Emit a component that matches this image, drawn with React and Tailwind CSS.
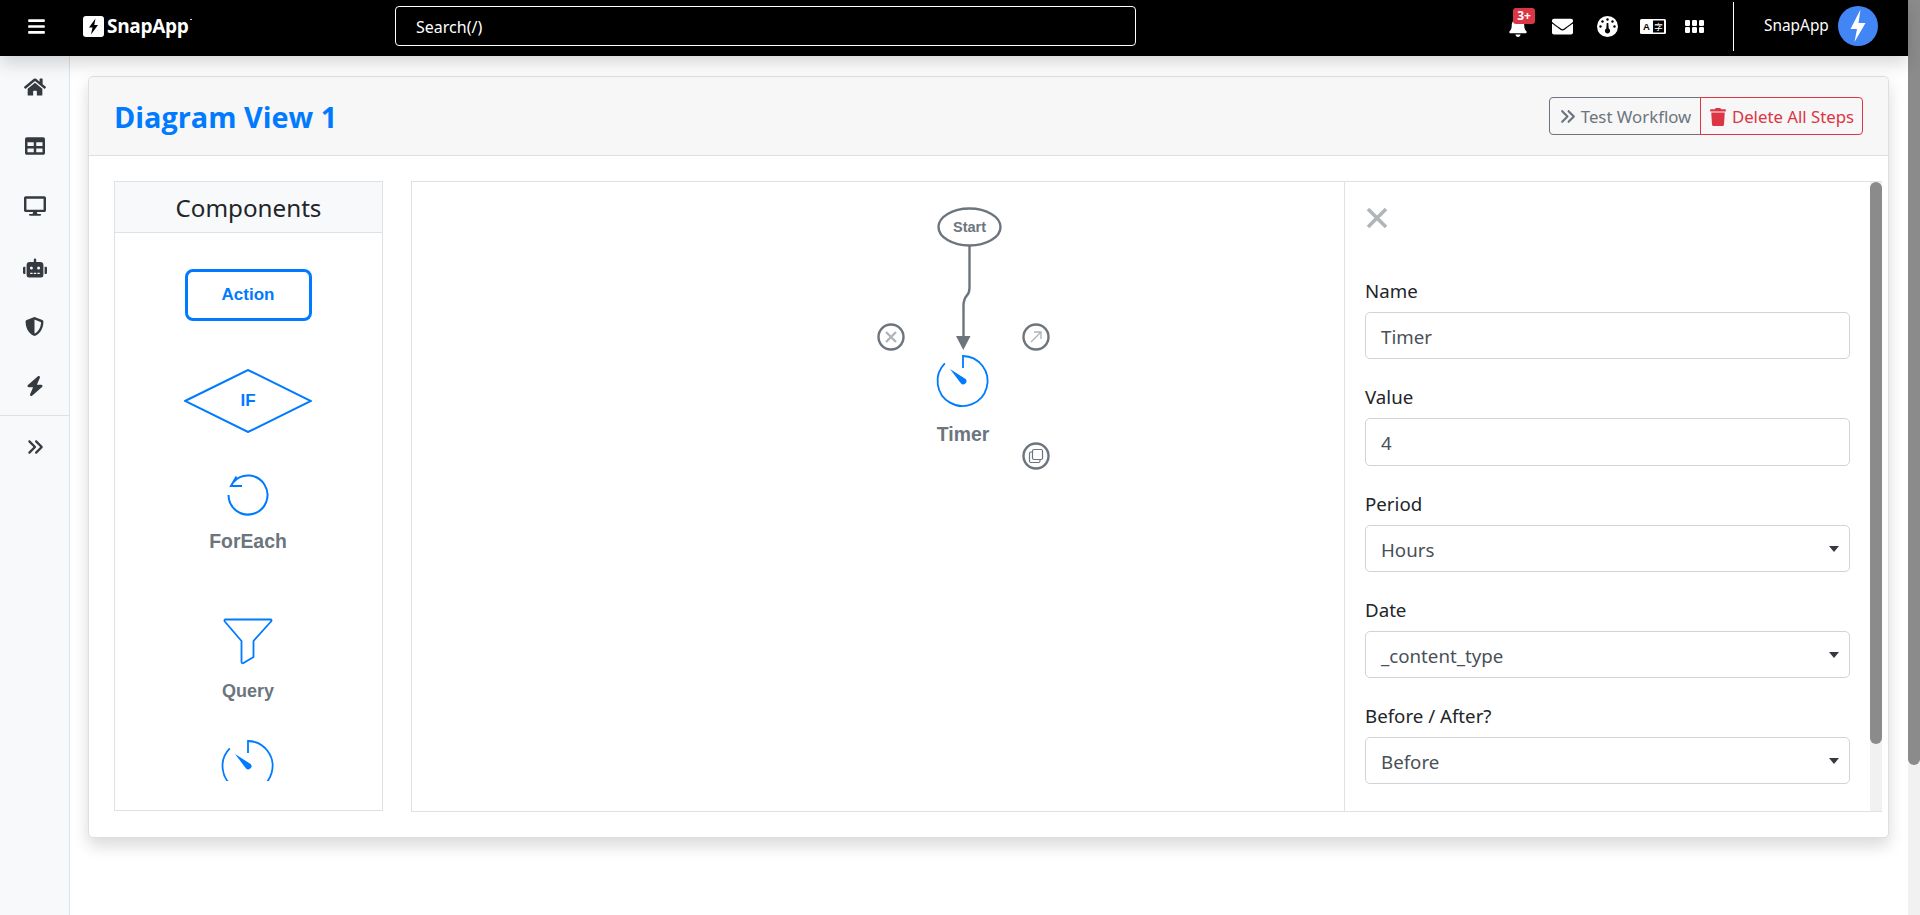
import React from "react";
import { FaBars, FaHome, FaTable, FaDesktop, FaRobot, FaShieldAlt, FaBell, FaEnvelope, FaTrash } from "react-icons/fa";
import { FaBolt, FaAnglesRight } from "react-icons/fa6";

const BLUE = "#007bff";
const GRAY = "#6c757d";

function TimerIcon({ cx, cy }) {
  return (
    <g>
      <path d={`M${cx} ${cy - 13}V${cy - 25}A25 25 0 1 1 ${cx - 18.2} ${cy - 17.6}`} fill="none" stroke={BLUE} strokeWidth="1.8" />
      <path d={`M${cx - 13} ${cy - 12}L${cx + 2.6} ${cy - 2}A3 3 0 1 1 ${cx - 2.2} ${cy + 2.2}Z`} fill={BLUE} />
    </g>
  );
}

function Diagram() {
  const label = { fontFamily: "'Liberation Sans', sans-serif", fontWeight: 700 };
  return (
    <svg className="block shrink-0" width="932" height="629" viewBox="412 182 932 629">
      <ellipse cx="969.500" cy="227" rx="31" ry="18.500" fill="none" stroke={GRAY} strokeWidth="2.4" />
      <text x="969.500" y="232" textAnchor="middle" fontSize="14.500" fill={GRAY} style={label}>Start</text>
      <path d="M969.500 246V288C969.500 298 963.500 293 963.500 306V337" fill="none" stroke={GRAY} strokeWidth="2.4" />
      <path d="M956 336H970.500L963.300 350Z" fill={GRAY} />
      <TimerIcon cx={963} cy={381} />
      <text x="963" y="441" textAnchor="middle" fontSize="19.4" fill={GRAY} style={label}>Timer</text>

      <circle cx="891" cy="337" r="12.500" fill="none" stroke={GRAY} strokeWidth="2.4" />
      <path d="M886 332L896 342M896 332L886 342" stroke="#b0b5b8" strokeWidth="2.4" />

      <circle cx="1036" cy="337" r="12.500" fill="none" stroke={GRAY} strokeWidth="2.4" />
      <path d="M1031 342L1041 332M1034 332H1041V339" fill="none" stroke="#b0b5b8" strokeWidth="1.4" />

      <circle cx="1036" cy="456" r="12.500" fill="none" stroke={GRAY} strokeWidth="2.4" />
      <rect x="1032.500" y="449.500" width="10" height="10" rx="1.500" fill="none" stroke={GRAY} strokeWidth="1.2" />
      <path d="M1032 452H1031A1.500 1.500 0 0 0 1029.500 453.500V461A1.500 1.500 0 0 0 1031 462.500H1038.500A1.500 1.500 0 0 0 1040 461V460" fill="none" stroke={GRAY} strokeWidth="1.2" />
    </svg>
  );
}

function Field({ label, value, select }) {
  return (
    <div className="mb-[27px]">
      <div className="h-[24px] mb-[8px] leading-[22px] text-[18.7px] text-[#212529] whitespace-nowrap">{label}</div>
      <div className="relative h-[47.25px] w-[485px] rounded-[5px] border border-[#ced4da] bg-white pl-[15px] pt-[3px] flex items-center text-[18.7px] text-[#495057]">
        {value}
        {select && (
          <svg className="absolute right-[10px] top-[20px]" width="10" height="6" viewBox="0 0 10 6">
            <path d="M0 0H10L5 6Z" fill="#343a40" />
          </svg>
        )}
      </div>
    </div>
  );
}

function Palette() {
  const cap = "shrink-0 font-['Liberation_Sans',sans-serif] font-bold leading-[24px] text-[#6c757d]";
  return (
    <div className="flex flex-col items-center h-[548px] overflow-hidden pr-[1px]">
      <div className="relative shrink-0 mt-[36px] w-[127px] h-[52px] rounded-[8px] border-[3px] border-[#007bff] flex items-center justify-center font-['Liberation_Sans',sans-serif] font-bold text-[17px] text-[#007bff]">
        Action
      </div>
      <div className="relative shrink-0 mt-[48px] w-[128px] h-[64px] flex items-center justify-center font-['Liberation_Sans',sans-serif] font-bold text-[17px] text-[#007bff]">
        <svg className="absolute inset-0" width="128" height="64" viewBox="0 0 128 64">
          <path d="M1 32L64 1L127 32L64 63Z" fill="none" stroke={BLUE} strokeWidth="2" />
        </svg>
        IF
      </div>
      <svg className="mt-[41px] shrink-0" width="44" height="44" viewBox="226 474 44 44">
        <path d="M228.500 495A19.500 19.500 0 1 0 233.500 482" fill="none" stroke={BLUE} strokeWidth="2" />
        <path d="M236.500 476.500L231 486H242" fill="none" stroke={BLUE} strokeWidth="2" />
      </svg>
      <div className={`${cap} text-[19.4px] mt-[11px]`}>ForEach</div>
      <svg className="mt-[64px] shrink-0" width="50" height="48" viewBox="223 617 50 48">
        <path d="M225.500 619.500C224.500 619.500 224 620.500 224.800 621.500L241.500 641V662C241.500 663.500 242.800 663.500 243.500 663L253.500 657V641L271 621.500C272 620.500 271.500 619.500 270.500 619.500Z" fill="none" stroke={BLUE} strokeWidth="1.8" />
      </svg>
      <div className={`${cap} text-[18px] mt-[14px]`}>Query</div>
      <svg className="mt-[36px] shrink-0" width="54" height="54" viewBox="221 738 54 54">
        <TimerIcon cx={248} cy={765} />
      </svg>
    </div>
  );
}

function Dial() {
  return (
    <svg width="21" height="21" viewBox="0 0 21 21" className="ml-[24px] shrink-0">
      <circle cx="10.500" cy="10.500" r="10.500" fill="#fff" />
      <circle cx="10.500" cy="3.500" r="1.200" fill="#000" />
      <circle cx="5.500" cy="5.500" r="1.200" fill="#000" />
      <circle cx="15.500" cy="5.500" r="1.200" fill="#000" />
      <circle cx="3.500" cy="10.500" r="1.200" fill="#000" />
      <circle cx="17.500" cy="10.500" r="1.200" fill="#000" />
      <path d="M9.700 7H11.300L11.700 12.500A2.600 2.600 0 1 1 9.300 12.500Z" fill="#000" />
    </svg>
  );
}

function Lang() {
  return (
    <svg width="26" height="15" viewBox="0 0 26 15" className="ml-[22px] shrink-0">
      <rect width="26" height="15" rx="1.500" fill="#fff" />
      <rect x="13" y="1.500" width="11" height="12" fill="#000" />
      <text x="6.500" y="11" textAnchor="middle" fontSize="9.500" fontWeight="700" fill="#000" fontFamily="'Liberation Sans', sans-serif">A</text>
      <text x="18.500" y="11" textAnchor="middle" fontSize="8.500" fill="#fff" fontFamily="'Noto Sans CJK SC', sans-serif">字</text>
    </svg>
  );
}

function Grid() {
  return (
    <svg width="19" height="13" viewBox="0 0 19 13" className="ml-[19px] shrink-0">
      {[0, 7, 14].map((x) =>
        [0, 7].map((y) => <rect key={`${x}-${y}`} x={x} y={y} width="5" height="6" rx="1.200" fill="#fff" />)
      )}
    </svg>
  );
}

export default function App() {
  const sideIcons = [
    [FaHome, 22, 87],
    [FaTable, 20, 146],
    [FaDesktop, 22, 206],
    [FaRobot, 24, 268],
    [FaShieldAlt, 19, 326],
    [FaBolt, 20, 386],
  ];
  return (
    <div className="flex w-full h-[915px] overflow-hidden bg-white font-['Noto_Sans','Open_Sans',sans-serif]">
      <div className="flex-1 min-w-0 flex flex-col">
        <header className="relative z-10 h-[56px] shrink-0 bg-black flex items-center pb-[4px] text-white shadow-[0_8px_16px_rgba(0,0,0,0.15)]">
          <FaBars className="ml-[27px] shrink-0" size={19} />
          <svg className="ml-[37px] shrink-0" width="21" height="21" viewBox="0 0 21 21">
            <rect width="21" height="21" rx="3" fill="#fff" />
            <path d="M12.500 2.500L6 11.500H9.500L8 18.500L15 9H11.300Z" fill="#000" />
          </svg>
          <div className="ml-[3px] w-[85px] shrink-0 font-['Open_Sans',sans-serif] font-bold text-[19px] leading-[24px] tracking-[-0.3px] flex items-start">
            SnapApp<span className="ml-[1px] mt-[5px] w-[4px] h-[1px] bg-gray-300" />
          </div>
          <div className="ml-[203px] w-[741px] h-[40px] shrink-0 rounded-[4px] border border-white flex items-center pl-[20px] pt-[2px] text-[16px] text-white">
            Search(/)
          </div>
          <div className="ml-auto flex items-center pr-[30px]">
            <div className="relative w-[20px] h-[22px]">
              <FaBell size={20} className="mt-[2px]" />
              <span className="absolute left-[5px] top-[-7px] w-[22px] h-[16px] rounded-[3px] bg-[#dc3545] text-white text-[12px] font-bold leading-[16px] text-center">3+</span>
            </div>
            <FaEnvelope className="ml-[24px] shrink-0" size={21} />
            <Dial />
            <Lang />
            <Grid />
            <div className="ml-[29px] w-px h-[49px] bg-white" />
            <span className="ml-[30px] w-[64px] text-[15.400px] whitespace-nowrap">SnapApp</span>
            <div className="ml-[10px] w-[40px] h-[40px] rounded-full bg-[#4285f4] flex items-center justify-center">
              <svg width="40" height="40" viewBox="0 0 40 40">
                <path d="M22.500 3.500L12.500 23H19L16.500 36L27.500 17H20.500Z" fill="#fff" />
              </svg>
            </div>
          </div>
        </header>

        <div className="flex flex-1 min-h-0">
          <aside className="w-[70px] shrink-0 bg-[#f8f9fa] border-r border-[#dee2e6] flex flex-col text-[#343a40]">
            <div className="h-[360px] border-b border-[#dee2e6] flex flex-col items-center">
              {sideIcons.map(([Icon, size, y], i) => {
                const prev = i === 0 ? 56 : sideIcons[i - 1][2] + sideIcons[i - 1][1] / 2;
                return <Icon key={i} size={size} className="shrink-0" style={{ marginTop: y - size / 2 - prev }} />;
              })}
            </div>
            <div className="flex justify-center mt-[22px]">
              <FaAnglesRight size={18} />
            </div>
          </aside>

          <main className="flex-1 min-w-0 pl-[18px] pt-[20px]">
            <div className="w-[1801px] h-[762px] bg-white border border-[#dfdfdf] rounded-[5px] shadow-[0_8px_16px_rgba(0,0,0,0.15)]">
              <div className="h-[79px] bg-[#f7f7f7] border-b border-[#dfdfdf] rounded-t-[5px] flex items-center justify-between pl-[25px] pr-[25px]">
                <h1 className="mt-[2px] font-['Open_Sans',sans-serif] font-bold text-[28.800px] leading-none text-[#007bff]">Diagram View 1</h1>
                <div className="flex h-[38px] text-[16.800px]">
                  <div className="w-[152px] pt-[1px] rounded-l-[4px] border border-[#6c757d] text-[#6c757d] flex items-center justify-center gap-[5px] whitespace-nowrap">
                    <FaAnglesRight size={17} />Test Workflow
                  </div>
                  <div className="w-[163px] pt-[1px] -ml-px rounded-r-[4px] border border-[#dc3545] text-[#dc3545] flex items-center justify-center gap-[5px] whitespace-nowrap">
                    <FaTrash size={18} />Delete All Steps
                  </div>
                </div>
              </div>
              <div className="flex gap-[28px] pl-[25px] pt-[25px]">
                <section className="w-[269px] h-[630px] shrink-0 border border-[#dee2e6]">
                  <div className="h-[51px] bg-[#f8f9fa] border-b border-[#dee2e6] flex items-center justify-center pt-[2px] text-[24.200px] text-[#212529]">Components</div>
                  <Palette />
                </section>
                <section className="w-[1471px] h-[631px] shrink-0 border-y border-l border-[#dee2e6] flex overflow-hidden">
                  <Diagram />
                  <div className="w-[526px] shrink-0 border-l border-[#dee2e6] pl-[20px] pt-[24px] overflow-hidden">
                    <svg className="block" width="24" height="24" viewBox="0 0 24 24">
                      <path d="M3 3L21 21M21 3L3 21" stroke="#b0b5b8" strokeWidth="3.600" />
                    </svg>
                    <div className="mt-[50px]">
                      <Field label="Name" value="Timer" />
                      <Field label="Value" value="4" />
                      <Field label="Period" value="Hours" select />
                      <Field label="Date" value="_content_type" select />
                      <Field label="Before / After?" value="Before" select />
                    </div>
                  </div>
                  <div className="w-[12px] shrink-0 bg-[#f1f1f1]">
                    <div className="h-[562px] bg-[#8b8b8b] rounded-[6px]" />
                  </div>
                </section>
              </div>
            </div>
          </main>
        </div>
      </div>
      <div className="w-[12px] shrink-0 bg-[#f1f1f1]">
        <div className="h-[765px] bg-[#8b8b8b] rounded-b-[6px]" />
      </div>
    </div>
  );
}
